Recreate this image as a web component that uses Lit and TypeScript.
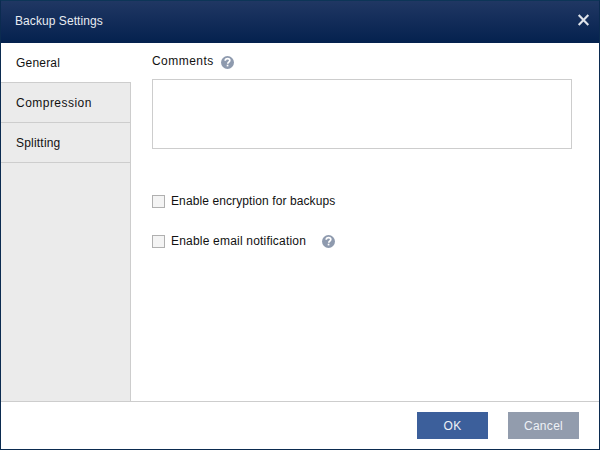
import { LitElement, html, css } from "lit";
import { customElement } from "lit/decorators.js";

const help = () => html`<svg width="14" height="14" viewBox="0 0 14 14">
  <circle cx="7.500" cy="7.500" r="6.500" fill="#8e9aae"></circle>
  <path d="M5.200 5.800C5.300 4.500 6.300 3.700 7.600 3.700c1.300 0 2.200.8 2.200 1.800 0 1-.6 1.400-1.200 1.800-.6.4-.8.7-.8 1.400" fill="none" stroke="#fff" stroke-width="1.700"></path>
  <rect x="6.700" y="9.700" width="1.700" height="1.700" fill="#fff"></rect>
</svg>`;

@customElement("app-root")
export class AppRoot extends LitElement {
  static styles = css`
    :host { display: block; width: 600px; height: 450px; font-family: "Liberation Sans", Arial, sans-serif; font-size: 12px; color: #111; }
    .window { box-sizing: border-box; width: 600px; height: 450px; display: flex; flex-direction: column; border: 1px solid #0b2b50; border-top-color: #0d3557; background: #fff; }
    .title { flex: 0 0 42px; display: flex; align-items: center; justify-content: space-between; padding: 0 9px 2px 14px; box-sizing: border-box; background: linear-gradient(#203763, #04214e); color: #e8ecf2; letter-spacing: .07px; }
    .close { display: block; }
    .body { flex: 1; display: flex; min-height: 0; }
    .side { flex: 0 0 130px; min-width: 0; box-sizing: border-box; background: #ebebeb; border-right: 1px solid #cdcdcd; display: flex; flex-direction: column; }
    .tab { box-sizing: border-box; height: 40px; padding: 0 15px; display: flex; align-items: center; border-bottom: 1px solid #cdcdcd; letter-spacing: .2px; }
    .tab.wide { letter-spacing: .47px; }
    .tab.active { background: #fff; margin-right: -1px; }
    .main { flex: 1; padding: 10px 0 0 21px; }
    .row { display: flex; align-items: center; }
    .comments { height: 16px; gap: 6px; letter-spacing: .45px; }
    .comments svg { margin-top: 2px; }
    .area { box-sizing: border-box; width: 420px; height: 70px; margin-top: 10px; border: 1px solid #cdcdcd; }
    .check { height: 16px; gap: 6px; }
    .check.first { margin-top: 44px; letter-spacing: .1px; }
    .check.second { margin-top: 24px; letter-spacing: .2px; }
    .box { box-sizing: border-box; width: 13px; height: 13px; border: 1px solid #b0b0b0; background: #f4f4f4; }
    .gap { margin-left: 3px; }
    .foot { flex: 0 0 48px; box-sizing: border-box; border-top: 1px solid #cdcdcd; display: flex; justify-content: flex-end; align-items: flex-start; gap: 20px; padding: 10px 20px 0 0; }
    .btn { box-sizing: border-box; width: 71px; height: 27px; border: 0; padding: 0; color: #eef1f6; font: inherit; letter-spacing: .3px; }
    .ok { background: #3c5f9b; }
    .cancel { background: #929cad; }
  `;

  render() {
    return html`<div class="window">
      <div class="title">
        <span>Backup Settings</span>
        <svg class="close" width="14" height="14" viewBox="0 0 14 14"><path d="M2.700 1l9.600 10M12.300 1L2.700 11" stroke="#dfe3ea" stroke-width="2.100" fill="none"></path></svg>
      </div>
      <div class="body">
        <div class="side">
          <div class="tab active">General</div>
          <div class="tab wide">Compression</div>
          <div class="tab">Splitting</div>
        </div>
        <div class="main">
          <div class="row comments"><span>Comments</span>${help()}</div>
          <div class="area"></div>
          <div class="row check first"><span class="box"></span><span>Enable encryption for backups</span></div>
          <div class="row check second"><span class="box"></span><span>Enable email notification</span><span class="gap"></span>${help()}</div>
        </div>
      </div>
      <div class="foot">
        <button class="btn ok">OK</button>
        <button class="btn cancel">Cancel</button>
      </div>
    </div>`;
  }
}
